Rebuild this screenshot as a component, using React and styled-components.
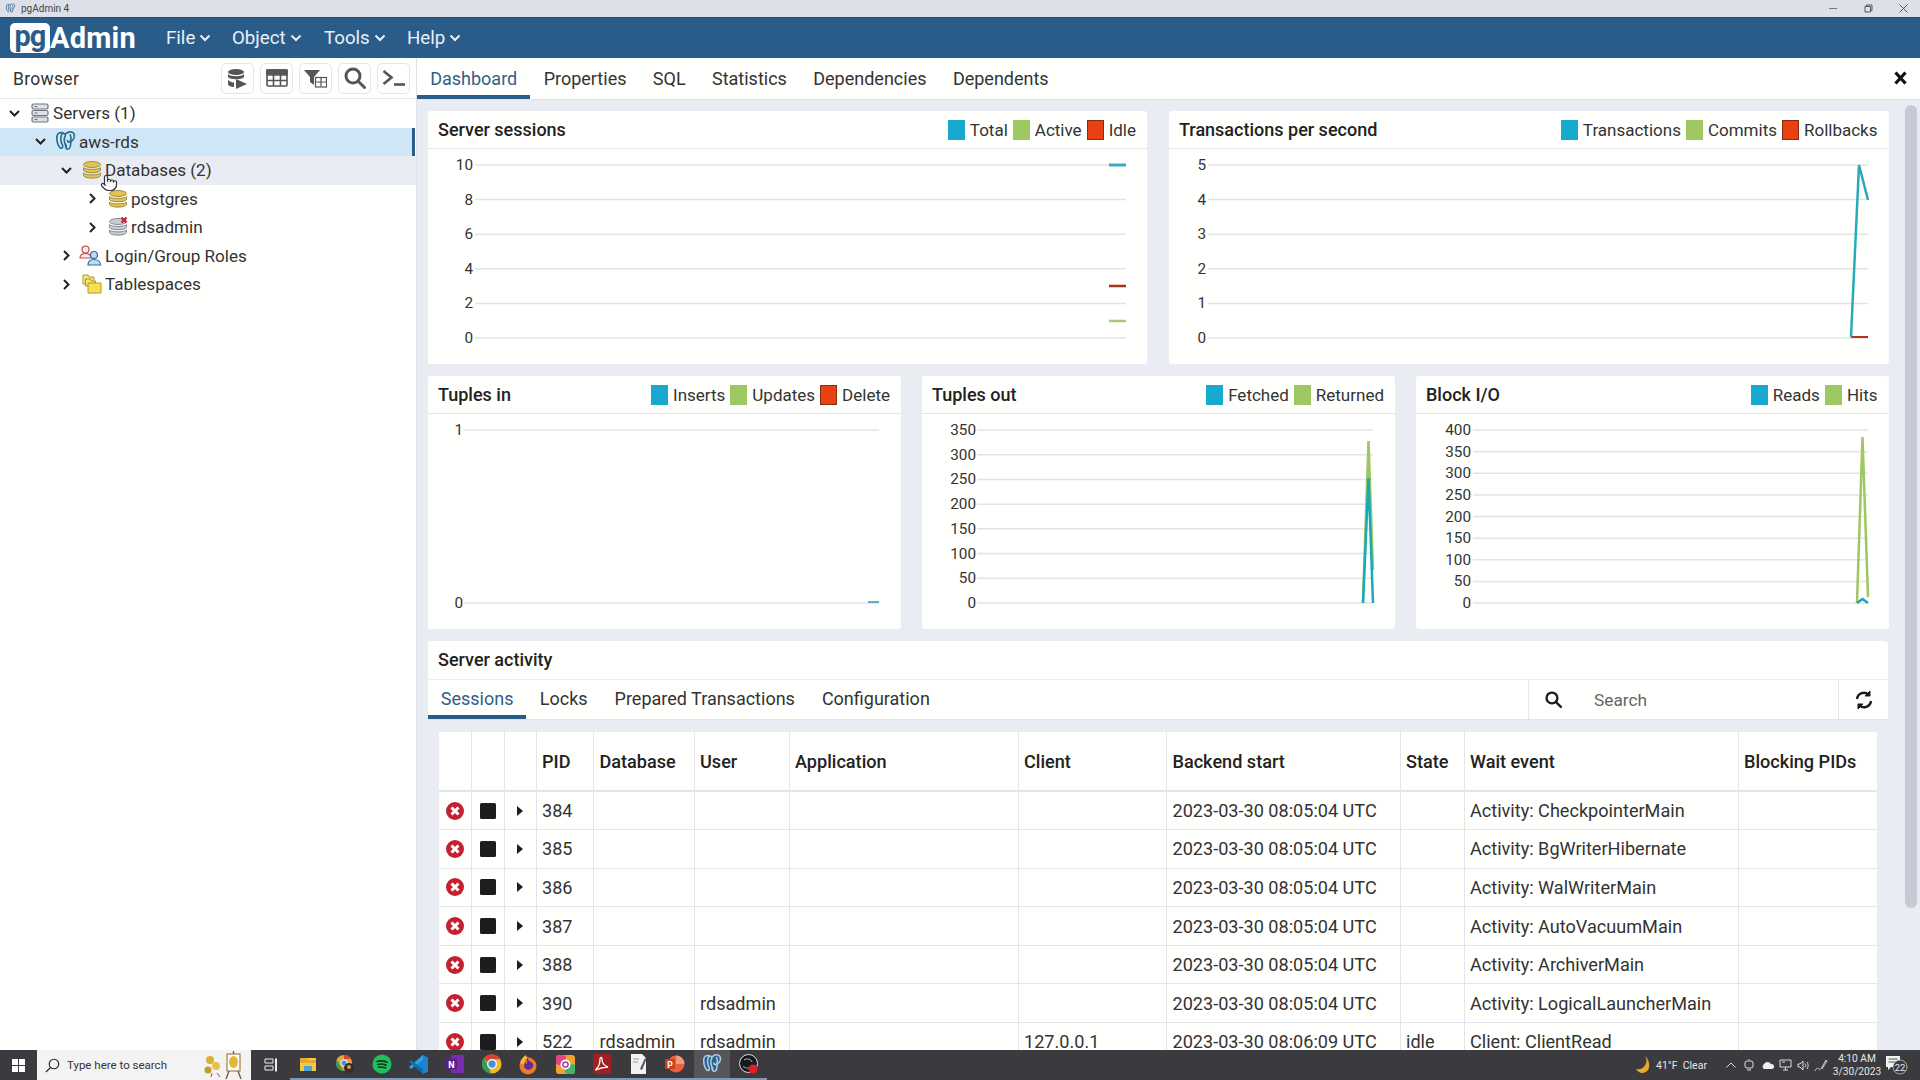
import React from "react";
import styled, { createGlobalStyle } from "styled-components";
import { Pointer } from "lucide-react";

const Global = createGlobalStyle`
  html, body { margin: 0; padding: 0; width: 1920px; height: 1080px; overflow: hidden; background: #e9ecf3; }
  * { box-sizing: border-box; }
  body { font-family: Roboto, "Liberation Sans", sans-serif; color: #222; }
`;

const Page = styled.div`display:flex;flex-direction:column;width:1920px;height:1080px;overflow:hidden;`;
const TitleBar = styled.div`height:17px;background:#dde0e8;display:flex;align-items:center;padding:0 0 0 5px;flex:none;`;
const TitleText = styled.span`font-size:10px;color:#444;margin-left:5px;flex:1;`;
const WinControls = styled.div`display:flex;gap:26px;padding-right:12px;align-items:center;`;

const Nav = styled.nav`height:41px;background:#2a5c8a;display:flex;align-items:center;flex:none;border-top:1px solid #245078;`;
const Logo = styled.div`display:flex;align-items:center;margin-left:10px;width:156px;`;
const LogoBox = styled.span`width:40px;height:30px;background:#fff;border-radius:5px;color:#2a5c8a;font:700 29px/26px Roboto,sans-serif;text-align:center;letter-spacing:-1px;padding-top:0;`;
const LogoText = styled.span`color:#fff;font:700 29px/30px Roboto,sans-serif;letter-spacing:.2px;`;
const NavItem = styled.div`display:flex;align-items:center;gap:4px;color:#e8f0f6;font-size:18.7px;width:${p=>p.$w}px;`;

const Main = styled.div`flex:1;display:flex;min-height:0;overflow:hidden;background:#e9ecf3;`;
const Sidebar = styled.aside`width:417px;flex:none;background:#fffffd;border-right:1px solid #dfe2e9;display:flex;flex-direction:column;position:relative;`;
const BrowserHead = styled.div`height:41px;flex:none;display:flex;align-items:center;justify-content:space-between;padding:0 6px 0 13px;border-bottom:1px solid #e6e8ee;font-size:17.5px;color:#333;letter-spacing:.3px;`;
const BrowserLabel = styled.span`padding-top:2px;`;
const Tools = styled.div`display:flex;gap:6px;`;
const ToolBtn = styled.div`width:33px;height:31px;border:1px solid #e3e5ea;border-radius:5px;background:#fff;display:flex;align-items:center;justify-content:center;`;
const Tree = styled.div`display:flex;flex-direction:column;`;
const Row = styled.div`
  height:28.5px;display:flex;align-items:center;font-size:17.1px;color:#333;
  padding-left:${p=>3+26*p.$level}px;
  background:${p=>p.$state==="selected"?"#cfe6f6":p.$state==="hover"?"#e9ecf2":"transparent"};
  border-right:${p=>p.$state==="selected"?"3px solid #2a5c8a":"0"};
  margin-right:${p=>p.$state==="selected"?"1px":"0"};
`;
const Chev = styled.span`width:22px;display:flex;justify-content:center;flex:none;`;
const TreeIcon = styled.span`width:28px;display:flex;align-items:center;flex:none;padding-left:${p=>p.$pad||4}px;`;
const Cursor = styled.div`position:absolute;left:100px;top:116px;line-height:0;`;

const Right = styled.div`flex:1;min-width:0;display:flex;flex-direction:column;position:relative;`;
const TabBar = styled.div`height:42px;flex:none;background:#fffffd;display:flex;align-items:stretch;border-bottom:1px solid #dfe2e9;position:relative;`;
const Tab = styled.div`
  padding:3px 13.2px 0;display:flex;align-items:center;font-size:18px;
  color:${p=>p.$active?"#2f5f8a":"#333"};
  border-bottom:${p=>p.$active?"4px solid #2a5c8a":"4px solid transparent"};
`;
const CloseTab = styled.div`position:absolute;right:13px;top:13px;line-height:0;`;
const Content = styled.div`flex:1;min-height:0;padding:11px 32px 0 11px;display:flex;flex-direction:column;gap:12px;`;
const Scrollbar = styled.div`position:absolute;right:3px;top:47px;width:12px;height:803px;background:#c5cad4;border-radius:6px;`;
const TopGrid = styled.div`display:grid;grid-template-columns:719px 719.5px;gap:22px;flex:none;`;
const LowGrid = styled.div`display:grid;grid-template-columns:473px 473px 472.5px;gap:21px;flex:none;`;
const Card = styled.section`height:253px;background:#fffffd;border-radius:3px;display:flex;flex-direction:column;`;
const CardHead = styled.header`height:38px;flex:none;display:flex;align-items:center;justify-content:space-between;padding:0 11px 0 10px;border-bottom:1px solid #e3e5ea;`;
const CardTitle = styled.h3`margin:0;font-size:18px;font-weight:500;color:#222;`;
const Legend = styled.div`display:flex;gap:5px;align-items:center;`;
const LegendItem = styled.span`display:flex;gap:5px;align-items:center;font-size:17px;color:#333;`;
const Swatch = styled.i`width:17px;height:20px;display:block;background:${p=>p.$c};border:${p=>p.$b?`1px solid ${p.$b}`:"0"};`;
const ChartSvg = styled.svg`display:block;width:100%;flex:1;min-height:0;`;
const Tick = styled.text`font:15.3px Roboto,sans-serif;fill:#333;text-anchor:end;`;

const Activity = styled.section`flex:none;background:#fffffd;border-radius:3px 3px 0 0;`;
const ActivityHead = styled.header`height:39px;display:flex;align-items:center;padding:0 0 2px 10px;border-bottom:1px solid #eceef2;`;
const ActivityBar = styled.div`height:40px;display:flex;align-items:stretch;border-bottom:1px solid #dfe2e9;`;
const ActivityTab = styled(Tab)`padding:2px ${p=>p.$first?"12.8px":"13.5px"} 0;`;
const Spacer = styled.div`flex:1;`;
const SearchBox = styled.div`width:311px;border-left:1px solid #e6e8ee;border-right:1px solid #e6e8ee;display:flex;align-items:center;padding-left:16px;gap:32px;font-size:17.3px;color:#666;`;
const Refresh = styled.div`width:49px;display:flex;align-items:center;justify-content:center;`;
const TableWrap = styled.div`background:#e9ecf3;padding:12px 11px 0;`;
const Table = styled.table`width:1438px;table-layout:fixed;border-collapse:collapse;background:#fffffd;font-size:18.1px;color:#333;`;
const Col = styled.col`width:${p=>p.$w}px;`;
const Th = styled.th`height:59px;text-align:left;font-weight:500;color:#222;padding:0 5.5px;border-left:1px solid #e3e5ea;border-bottom:2px solid #e3e5ea;&:first-child{border-left:0;}`;
const Td = styled.td`height:38.6px;padding:0 5.5px;border-left:1px solid #e3e5ea;border-bottom:1px solid #e3e5ea;white-space:nowrap;overflow:hidden;&:first-child{border-left:0;}`;
const IconTd = styled(Td)`padding:0;line-height:0;text-align:center;`;

const Taskbar = styled.footer`height:30px;flex:none;background:#3a3a3f;display:flex;align-items:center;color:#e6e6e6;position:relative;`;
const StartBtn = styled.div`width:37px;display:flex;justify-content:center;`;
const TaskSearch = styled.div`width:214px;height:30px;background:#f3f3f3;display:flex;align-items:center;padding-left:8px;gap:7px;color:#333;font-size:11.5px;position:relative;flex:none;`;
const Doodle = styled.span`margin-left:auto;margin-right:6px;line-height:0;`;
const TaskApps = styled.div`display:flex;align-items:stretch;height:30px;flex:1;`;
const TaskView = styled.div`width:39px;display:flex;align-items:center;justify-content:center;`;
const TaskApp = styled.div`
  width:36.7px;display:flex;align-items:center;justify-content:center;
  background:${p=>p.$active?"#55555a":"transparent"};
  border-bottom:2px solid #7c9ab5;
`;
const Tray = styled.div`display:flex;align-items:center;height:30px;`;
const Weather = styled.span`display:flex;align-items:center;gap:6px;font-size:10.5px;width:88px;`;
const TrayIcon = styled.span`width:18px;display:flex;justify-content:center;line-height:0;`;
const Clock = styled.div`width:50px;margin-left:2px;text-align:center;font-size:10.2px;line-height:13px;`;
const Notice = styled.div`width:30px;margin-right:8px;display:flex;justify-content:center;line-height:0;`;

const Elephant = ({s=18,c="#2a6d8c",f="none"})=>(
  <svg width={s} height={s} viewBox="0 0 24 24" fill={f} stroke={c} strokeWidth="1.7" strokeLinejoin="round" strokeLinecap="round">
    <path d="M3 7c0-3 3-5 6-4 1.500.5 2 1 3 1s2-2 5-2c3 0 5 2 4 6-.5 2-2 3-3 4l-.5 1c0 3-1 7-3 7s-2.500-3-2.500-5" />
    <path d="M9 3C6 7 7 13 9 16c.5 1 0 3-1.500 3-2 0-3-3-4-6C2.800 11 3 9 3 7" />
    <path d="M12 5c-2 4-1 9 1 12M17 5c1 2 1 5 0 7-1 1-3 1-3-1" />
  </svg>
);
const Stack = ({c="#e3c34f",d="#8a7a2e",x})=>(
  <svg width="20" height="20" viewBox="0 0 20 20">
    <ellipse cx="10" cy="4.500" rx="8.500" ry="3" fill={c} stroke={d} strokeWidth=".8"/>
    <path d="M1.500 7.500c1 2.500 16 2.500 17 0v3c-1 3-16 3-17 0z" fill={c} stroke={d} strokeWidth=".8"/>
    <path d="M1.500 13c1 2.500 16 2.500 17 0v2.500c-1 3.500-16 3.500-17 0z" fill={c} stroke={d} strokeWidth=".8"/>
    {x && <path d="M13.500 .5l5 5M18.500 .5l-5 5" stroke="#c8202f" strokeWidth="2.200"/>}
  </svg>
);
const Servers = ()=>(
  <svg width="18" height="20" viewBox="0 0 18 20" fill="#dfe1e8" stroke="#70757f" strokeWidth="1.200">
    <rect x="1" y="1" width="16" height="5" rx="1.500"/><rect x="1" y="7.500" width="16" height="5" rx="1.500"/><rect x="1" y="14" width="16" height="5" rx="1.500"/>
    <path d="M3.500 3.500h3M3.500 10h3M3.500 16.500h3" stroke="#70757f" strokeWidth="1"/>
  </svg>
);
const Roles = ()=>(
  <svg width="23" height="21" viewBox="0 0 23 21" strokeWidth="1.200">
    <circle cx="6.500" cy="4.500" r="3.500" fill="#fbeaea" stroke="#c64a54"/>
    <path d="M1 13c0-3 2-4.500 5.500-4.500S12 10 12 13z" fill="#fbeaea" stroke="#c64a54"/>
    <circle cx="15" cy="10" r="3.500" fill="#bcdcf2" stroke="#346a9e"/>
    <path d="M9 20c0-3.500 2.500-5.500 6-5.500s6.500 2 6.500 5.500z" fill="#bcdcf2" stroke="#346a9e"/>
  </svg>
);
const Tablespace = ()=>(
  <svg width="20" height="20" viewBox="0 0 20 20" fill="#f5e67c" stroke="#b09a26" strokeWidth="1">
    <path d="M1 1h5l1 2h5v7H1z" /><path d="M3.500 5h5l1 2h4v5h-10z"/><path d="M6 9h13v10H6z" fill="#f3e055"/>
  </svg>
);
const ChevD = ()=><svg width="13" height="9" viewBox="0 0 13 9" fill="none" stroke="#222" strokeWidth="2"><path d="M2 2l4.500 4.500L11 2"/></svg>;
const ChevR = ()=><svg width="9" height="13" viewBox="0 0 9 13" fill="none" stroke="#222" strokeWidth="2"><path d="M2 2l4.500 4.500L2 11"/></svg>;
const NavChev = ()=><svg width="12" height="8" viewBox="0 0 12 8" fill="none" stroke="#e8f0f6" strokeWidth="2"><path d="M1.500 1.500L6 6l4.500-4.500"/></svg>;

const QueryTool = ()=>(
  <svg width="21" height="21" viewBox="0 0 21 21" fill="#555">
    <ellipse cx="9" cy="4" rx="8" ry="3"/><path d="M1 6c2 3 14 3 16 0v3c-2 3-14 3-16 0z"/><path d="M1 12c2 2 5 2.500 6 2.500V19c-3 0-6-1-6-3z"/><path d="M9 11l11 5-11 5z"/>
  </svg>
);
const GridIcon = ()=>(
  <svg width="22" height="18" viewBox="0 0 22 18" fill="none" stroke="#555" strokeWidth="1.600">
    <rect x="1" y="1" width="20" height="16" rx="1"/><path d="M1 6h20M1 11.500h20M7.500 1v16M14.500 1v16" /><path d="M1 1h20v4H1z" fill="#555"/>
  </svg>
);
const FilterIcon = ()=>(
  <svg width="23" height="19" viewBox="0 0 23 19">
    <path d="M0 1h16l-6 7v8l-4-3V8z" fill="#555"/>
    <rect x="11.500" y="8.500" width="11" height="9.500" fill="#fff" stroke="#555" strokeWidth="1.200"/><path d="M11.500 13h11M17 8.500v9" stroke="#555" strokeWidth="1.200"/>
  </svg>
);
const SearchIcon = ({s=22,c="#555"})=>(
  <svg width={s} height={s} viewBox="0 0 22 22" fill="none" stroke={c} strokeWidth="3"><circle cx="9" cy="9" r="7"/><path d="M14 14l6.500 6.500" strokeLinecap="round"/></svg>
);
const Terminal = ()=>(
  <svg width="24" height="18" viewBox="0 0 24 18" fill="none" stroke="#555" strokeWidth="2.600"><path d="M1.500 2l8 6.500-8 6.500"/><path d="M12 15.500h11"/></svg>
);
const RefreshIcon = ()=>(
  <svg width="18" height="18" viewBox="0 0 18 18" fill="none" stroke="#1a1a1a" strokeWidth="2.400">
    <path d="M2 8a7 7 0 0 1 12-4"/><path d="M16 10a7 7 0 0 1-12 4"/><path d="M15 0v5h-5z" fill="#1a1a1a" strokeWidth="1"/><path d="M3 18v-5h5z" fill="#1a1a1a" strokeWidth="1"/>
  </svg>
);
const CancelIcon = ()=>(
  <svg width="18" height="18" viewBox="0 0 18 18"><circle cx="9" cy="9" r="9" fill="#c51f30"/><path d="M5.500 5.500l7 7M12.500 5.500l-7 7" stroke="#fff" strokeWidth="3"/></svg>
);
const StopIcon = ()=><svg width="16" height="16" viewBox="0 0 16 16"><rect width="16" height="16" rx="1.500" fill="#1d1d20"/></svg>;
const Caret = ()=><svg width="6" height="10" viewBox="0 0 6 10"><path d="M0 0l6 5-6 5z" fill="#1d1d20"/></svg>;

const Chart = ({vb,x0,x1,labelX,ticks,series})=>(
  <ChartSvg viewBox={vb} preserveAspectRatio="none">
    {ticks.map(([label,y])=>(
      <g key={label}>
        <line x1={x0} x2={x1} y1={y} y2={y} stroke="#e3e3e3" strokeWidth="1.500"/>
        <Tick x={labelX} y={y+5}>{label}</Tick>
      </g>
    ))}
    {series.map((s,i)=><polyline key={i} points={s.pts} fill="none" stroke={s.c} strokeWidth={s.w||2}/>)}
  </ChartSvg>
);
const spread=(labels,top,bottom)=>labels.map((l,i)=>[l,top+(bottom-top)*i/(labels.length-1)]);
const TEAL="#17a9cf",GREEN="#9cc761",RED="#ea4113";

const ChartCard=({title,legend,children})=>(
  <Card>
    <CardHead>
      <CardTitle>{title}</CardTitle>
      <Legend>{legend.map(([n,c,b])=><LegendItem key={n}><Swatch $c={c} $b={b}/>{n}</LegendItem>)}</Legend>
    </CardHead>
    {children}
  </Card>
);

const rows=[
 ["384","","","","","2023-03-30 08:05:04 UTC","","Activity: CheckpointerMain"],
 ["385","","","","","2023-03-30 08:05:04 UTC","","Activity: BgWriterHibernate"],
 ["386","","","","","2023-03-30 08:05:04 UTC","","Activity: WalWriterMain"],
 ["387","","","","","2023-03-30 08:05:04 UTC","","Activity: AutoVacuumMain"],
 ["388","","","","","2023-03-30 08:05:04 UTC","","Activity: ArchiverMain"],
 ["390","","rdsadmin","","","2023-03-30 08:05:04 UTC","","Activity: LogicalLauncherMain"],
 ["522","rdsadmin","rdsadmin","","127.0.0.1","2023-03-30 08:06:09 UTC","idle","Client: ClientRead"],
];
const cols=[32,33,32,57.5,100.5,95,229,148.5,233.5,64,274,139];
const heads=["PID","Database","User","Application","Client","Backend start","State","Wait event","Blocking PIDs"];

const WinLogo=()=><svg width="13" height="13" viewBox="0 0 13 13" fill="#fff"><path d="M0 0h6v6H0zM7 0h6v6H7zM0 7h6v6H0zM7 7h6v6H7z"/></svg>;
const apps=[
 <svg key="a" width="18" height="18" viewBox="0 0 18 18"><path d="M1 3h16v13H1z" fill="#f3c944"/><path d="M1 3h7l1 2h8v3H1z" fill="#e5a92e"/><path d="M5 11h8v5H5z" fill="#4ba3d6"/></svg>,
 <svg key="b" width="20" height="20" viewBox="0 0 20 20"><circle cx="9" cy="9" r="8" fill="#e0a93a"/><path d="M9 1a8 8 0 0 1 7 4H9z" fill="#d8442f"/><path d="M1.800 5.500L6 13l3 4a8 8 0 0 1-7.200-11.500z" fill="#3a9a58"/><circle cx="9" cy="9" r="3.200" fill="#4a8fdc" stroke="#fff"/><circle cx="14" cy="14" r="5" fill="#3c2a20"/><circle cx="14" cy="13" r="2" fill="#d09a78"/></svg>,
 <svg key="c" width="20" height="20" viewBox="0 0 20 20"><circle cx="10" cy="10" r="9.500" fill="#1fc05d"/><path d="M5 7.500c3.500-1 7-.7 10 .8M5.700 10.500c3-.8 6-.6 8.500.7M6.500 13.300c2.500-.6 4.800-.4 7 .6" stroke="#14341f" strokeWidth="1.600" fill="none" strokeLinecap="round"/></svg>,
 <svg key="d" width="19" height="19" viewBox="0 0 19 19"><path d="M14 0l5 2.500v14L14 19 5 10.500z" fill="#1c85d2"/><path d="M14 0L0 12l2 2L14 5z" fill="#2aa4ef"/><path d="M14 19L0 7l2-2 12 9z" fill="#0f6db1"/></svg>,
 <svg key="e" width="19" height="20" viewBox="0 0 19 20"><path d="M5 1h13v18H5z" fill="#7a2bb0"/><rect x="0" y="4.500" width="11" height="11" rx="1" fill="#5c1f8e"/><text x="5.500" y="13.500" fontSize="9" fontWeight="700" fill="#fff" textAnchor="middle" fontFamily="Roboto">N</text></svg>,
 <svg key="f" width="20" height="20" viewBox="0 0 20 20"><circle cx="10" cy="10" r="9.500" fill="#ecb92f"/><path d="M10 .5a9.500 9.500 0 0 1 8.300 4.800H10A5 5 0 0 0 5.500 8L2 3.800A9.500 9.500 0 0 1 10 .5z" fill="#d8442f"/><path d="M2 3.800L6 11l3 8.400A9.500 9.500 0 0 1 2 3.800z" fill="#3a9a58"/><circle cx="10" cy="10" r="4.300" fill="#4a8fdc" stroke="#fff" strokeWidth="1.300"/></svg>,
 <svg key="g" width="20" height="21" viewBox="0 0 20 21"><circle cx="10" cy="12" r="8.500" fill="#ee7b22"/><path d="M10 3c-1 2 1 4 3 5 3 1.500 3 6-1 7.500-3 1-6-1-6-4 0-2 1-3 2-4-1 3 1 3 1 1s-1-4 1-5.500z" fill="#5f2ba0"/><path d="M2 9c1-4 3-6 6-8 0 2 1 2 3 2-3 1-5 4-5 8z" fill="#f5b53c"/></svg>,
 <svg key="h" width="19" height="19" viewBox="0 0 19 19"><rect width="19" height="19" rx="3" fill="#f2a12f"/><rect width="10" height="10" rx="3" fill="#dd4589"/><rect x="9" y="9" width="10" height="10" rx="3" fill="#41b36b"/><circle cx="9.500" cy="9.500" r="5" fill="#fff"/><circle cx="9.500" cy="9.500" r="2.600" fill="none" stroke="#a33ea5" strokeWidth="1.500"/></svg>,
 <svg key="i" width="18" height="20" viewBox="0 0 18 20"><rect width="18" height="20" rx="2" fill="#a31e22"/><path d="M3 15c3-2 4-6 4-10 0-2 2-2 2 0 0 4 3 7 6 8-4 0-8 1-12 3z" fill="none" stroke="#fff" strokeWidth="1.300"/></svg>,
 <svg key="j" width="17" height="20" viewBox="0 0 17 20"><path d="M1 0h11l4 4v16H1z" fill="#f2f2f2"/><path d="M10 15L15 4l1.500 1L12 16z" fill="#555"/><path d="M3 5h6M3 8h5" stroke="#999"/></svg>,
 <svg key="k" width="20" height="20" viewBox="0 0 20 20"><circle cx="11" cy="10" r="8.500" fill="#e8603c"/><path d="M11 1.500A8.500 8.500 0 0 1 19.500 10H11z" fill="#f29a7e"/><rect x="0" y="5" width="10" height="10" rx="1" fill="#c6431f"/><text x="5" y="13.500" fontSize="8.500" fontWeight="700" fill="#fff" textAnchor="middle" fontFamily="Roboto">P</text></svg>,
 <Elephant key="l" s={22} c="#a8cfe8" f="#2f5f8f"/>,
 <svg key="m" width="20" height="21" viewBox="0 0 20 21"><circle cx="9.500" cy="9.500" r="9" fill="#181820" stroke="#ddd"/><path d="M5 6c3-2 7-1 8 2M4 12c2 2 5 3 8 1" stroke="#bbb" fill="none"/><circle cx="14" cy="15" r="4.500" fill="#e41e1e"/></svg>,
];

export default function App(){
  return (
    <Page>
      <Global/>
      <TitleBar>
        <Elephant s={11} c="#3b6d96"/>
        <TitleText>pgAdmin 4</TitleText>
        <WinControls>
          <svg width="9" height="9" viewBox="0 0 9 9" stroke="#777"><path d="M0 4.500h8"/></svg>
          <svg width="9" height="9" viewBox="0 0 9 9" fill="none" stroke="#555"><path d="M1 2.500h5.500V8H1zM2.500 2.500V1H8v5.500H6.500"/></svg>
          <svg width="9" height="9" viewBox="0 0 9 9" stroke="#555"><path d="M.5.500l8 8M8.500.5l-8 8"/></svg>
        </WinControls>
      </TitleBar>
      <Nav>
        <Logo><LogoBox>pg</LogoBox><LogoText>Admin</LogoText></Logo>
        <NavItem $w={66}>File<NavChev/></NavItem>
        <NavItem $w={92}>Object<NavChev/></NavItem>
        <NavItem $w={83}>Tools<NavChev/></NavItem>
        <NavItem>Help<NavChev/></NavItem>
      </Nav>
      <Main>
        <Sidebar>
          <BrowserHead>
            <BrowserLabel>Browser</BrowserLabel>
            <Tools>
              <ToolBtn><QueryTool/></ToolBtn>
              <ToolBtn><GridIcon/></ToolBtn>
              <ToolBtn><FilterIcon/></ToolBtn>
              <ToolBtn><SearchIcon/></ToolBtn>
              <ToolBtn><Terminal/></ToolBtn>
            </Tools>
          </BrowserHead>
          <Tree>
            <Row $level={0}><Chev><ChevD/></Chev><TreeIcon $pad={6}><Servers/></TreeIcon>Servers (1)</Row>
            <Row $level={1} $state="selected"><Chev><ChevD/></Chev><TreeIcon $pad={3}><Elephant s={23}/></TreeIcon>aws-rds</Row>
            <Row $level={2} $state="hover"><Chev><ChevD/></Chev><TreeIcon $pad={5}><Stack/></TreeIcon>Databases (2)</Row>
            <Row $level={3}><Chev><ChevR/></Chev><TreeIcon $pad={5}><Stack/></TreeIcon>postgres</Row>
            <Row $level={3}><Chev><ChevR/></Chev><TreeIcon $pad={5}><Stack c="#c9ccd4" d="#6f7480" x/></TreeIcon>rdsadmin</Row>
            <Row $level={2}><Chev><ChevR/></Chev><TreeIcon $pad={2}><Roles/></TreeIcon>Login/Group Roles</Row>
            <Row $level={2}><Chev><ChevR/></Chev><TreeIcon $pad={5}><Tablespace/></TreeIcon>Tablespaces</Row>
          </Tree>
          <Cursor><Pointer size={18} fill="#fff" color="#333" strokeWidth={1.6}/></Cursor>
        </Sidebar>
        <Right>
          <TabBar>
            <Tab $active>Dashboard</Tab><Tab>Properties</Tab><Tab>SQL</Tab><Tab>Statistics</Tab><Tab>Dependencies</Tab><Tab>Dependents</Tab>
            <CloseTab>
              <svg width="13" height="14" viewBox="0 0 13 14" stroke="#111" strokeWidth="3.200"><path d="M1.500 1.500l10 11M11.500 1.500l-10 11"/></svg>
            </CloseTab>
          </TabBar>
          <Content>
            <TopGrid>
              <ChartCard title="Server sessions" legend={[["Total",TEAL],["Active",GREEN],["Idle",RED,"#8a2a10"]]}>
                <Chart vb="428 149 719 215" x0={475} x1={1126} labelX={473}
                  ticks={spread(["10","8","6","4","2","0"],165,338)}
                  series={[
                    {pts:"1109,165 1126,165",c:"#3fa9c0",w:3},
                    {pts:"1109,286 1126,286",c:"#a5331f",w:2.500},
                    {pts:"1109,321 1126,321",c:"#a8c57f",w:2.500},
                  ]}/>
              </ChartCard>
              <ChartCard title="Transactions per second" legend={[["Transactions",TEAL],["Commits",GREEN],["Rollbacks",RED,"#8a2a10"]]}>
                <Chart vb="1169 149 719.500 215" x0={1208} x1={1868} labelX={1206}
                  ticks={spread(["5","4","3","2","1","0"],165,338)}
                  series={[
                    {pts:"1851,337 1868,337",c:"#b8321c"},
                    {pts:"1851,337 1859,165 1868,200",c:"#2aaab9",w:2.500},
                  ]}/>
              </ChartCard>
            </TopGrid>
            <LowGrid>
              <ChartCard title="Tuples in" legend={[["Inserts",TEAL],["Updates",GREEN],["Delete",RED,"#8a2a10"]]}>
                <Chart vb="428 414 473 215" x0={464} x1={879} labelX={463}
                  ticks={spread(["1","0"],430,603)}
                  series={[{pts:"868,602 879,602",c:"#5fb0c0"}]}/>
              </ChartCard>
              <ChartCard title="Tuples out" legend={[["Fetched",TEAL],["Returned",GREEN]]}>
                <Chart vb="922 414 473 215" x0={977} x1={1373} labelX={976}
                  ticks={spread(["350","300","250","200","150","100","50","0"],430,603)}
                  series={[
                    {pts:"1363,603 1368.500,441 1373,570",c:GREEN,w:2.500},
                    {pts:"1363,603 1368.500,478 1373,603",c:"#1aa9b9",w:2.500},
                  ]}/>
              </ChartCard>
              <ChartCard title="Block I/O" legend={[["Reads",TEAL],["Hits",GREEN]]}>
                <Chart vb="1416 414 472.500 215" x0={1473} x1={1868} labelX={1471}
                  ticks={spread(["400","350","300","250","200","150","100","50","0"],430,603)}
                  series={[
                    {pts:"1857,603 1862.500,437 1868,597",c:GREEN,w:2.500},
                    {pts:"1857,603 1862.500,599 1868,603",c:"#1aa9b9",w:2.500},
                  ]}/>
              </ChartCard>
            </LowGrid>
            <Activity>
              <ActivityHead><CardTitle>Server activity</CardTitle></ActivityHead>
              <ActivityBar>
                <ActivityTab $active $first>Sessions</ActivityTab>
                <ActivityTab>Locks</ActivityTab>
                <ActivityTab>Prepared Transactions</ActivityTab>
                <ActivityTab>Configuration</ActivityTab>
                <Spacer/>
                <SearchBox><SearchIcon s={17} c="#1a1a1a"/>Search</SearchBox>
                <Refresh><RefreshIcon/></Refresh>
              </ActivityBar>
              <TableWrap>
                <Table>
                  <colgroup>{cols.map((w,i)=><Col key={i} $w={w}/>)}</colgroup>
                  <thead><tr><Th/><Th/><Th/>{heads.map(h=><Th key={h}>{h}</Th>)}</tr></thead>
                  <tbody>
                    {rows.map(r=>(
                      <tr key={r[0]}>
                        <IconTd><CancelIcon/></IconTd>
                        <IconTd><StopIcon/></IconTd>
                        <IconTd><Caret/></IconTd>
                        {r.map((v,i)=><Td key={i}>{v}</Td>)}
                        <Td/>
                      </tr>
                    ))}
                  </tbody>
                </Table>
              </TableWrap>
            </Activity>
          </Content>
          <Scrollbar/>
        </Right>
      </Main>
      <Taskbar>
        <StartBtn><WinLogo/></StartBtn>
        <TaskSearch>
          <svg width="15" height="15" viewBox="0 0 15 15" fill="none" stroke="#222" strokeWidth="1.100"><circle cx="9" cy="6" r="4.800"/><path d="M5.500 9.500L1 14"/></svg>
          Type here to search
          <Doodle>
            <svg width="42" height="28" viewBox="0 0 42 28">
              <circle cx="7" cy="9" r="4" fill="#d9b03a"/><circle cx="13" cy="15" r="4" fill="#e6c24b"/><circle cx="5" cy="19" r="3.500" fill="#c79a2d"/>
              <path d="M14 22l3 4M9 22l-1 4" stroke="#7d6a2a"/>
              <rect x="24" y="3" width="13" height="17" fill="#fff" stroke="#8a6a2a"/><ellipse cx="30.500" cy="11" rx="4.500" ry="6" fill="#e6b737"/>
              <path d="M26 20l-3 8M35 20l3 8M30.500 0v3" stroke="#8a5a2a" strokeWidth="1.400"/>
            </svg>
          </Doodle>
        </TaskSearch>
        <TaskApps>
          <TaskView>
            <svg width="14" height="14" viewBox="0 0 14 14" fill="none" stroke="#eee"><path d="M1 1h8v4H1zM1 8h8v4H1z"/><path d="M12 .5v13" strokeWidth="2"/></svg>
          </TaskView>
          {apps.map((a,i)=><TaskApp key={i} $active={i===11}>{a}</TaskApp>)}
        </TaskApps>
        <Tray>
          <Weather>
            <svg width="16" height="18" viewBox="0 0 16 18"><path d="M11 0a8.500 8.500 0 0 1-9 13c2 4 8 6 12 1 2.500-3.500 1-11-3-14z" fill="#eea52e"/></svg>
            41°F&nbsp;&nbsp;Clear
          </Weather>
          <TrayIcon><svg width="10" height="6" viewBox="0 0 10 6" fill="none" stroke="#ddd"><path d="M.5 5.500L5 1l4.500 4.500"/></svg></TrayIcon>
          <TrayIcon><svg width="10" height="12" viewBox="0 0 10 12" fill="none" stroke="#ddd"><rect x="1" y="2" width="8" height="7" rx="2"/><path d="M3 11h4M5 0v1"/></svg></TrayIcon>
          <TrayIcon><svg width="13" height="8" viewBox="0 0 13 8" fill="#eee"><path d="M3 8a3 3 0 0 1 0-5 4 4 0 0 1 7 0 2.500 2.500 0 0 1 1 5z"/></svg></TrayIcon>
          <TrayIcon><svg width="13" height="12" viewBox="0 0 13 12" fill="none" stroke="#ddd"><path d="M1 1h11v7H1zM4 11h5M6.500 8v3M3 3h3"/></svg></TrayIcon>
          <TrayIcon><svg width="12" height="11" viewBox="0 0 12 11" fill="none" stroke="#ddd"><path d="M1 4h2l3-3v9L3 7H1zM8 3.500c1 1 1 3 0 4M10 2c1.500 2 1.500 5 0 7"/></svg></TrayIcon>
          <TrayIcon><svg width="14" height="14" viewBox="0 0 14 14" fill="none" stroke="#ccc"><path d="M1 13c1-3 3-3 4-2s2 0 3-2l4-7 1 1-5 8"/></svg></TrayIcon>
          <Clock>4:10 AM<br/>3/30/2023</Clock>
          <Notice>
            <svg width="24" height="20" viewBox="0 0 24 20"><path d="M1 1h14v11H6l-3 3v-3H1z" fill="#f2f2f2"/><path d="M3.500 4h9M3.500 7h9" stroke="#555"/><circle cx="15" cy="12" r="7" fill="#3a3a3f" stroke="#ccc" strokeWidth=".8"/><text x="15" y="15.500" fontSize="9.500" fill="#eee" textAnchor="middle" fontFamily="Roboto">22</text></svg>
          </Notice>
        </Tray>
      </Taskbar>
    </Page>
  );
}
